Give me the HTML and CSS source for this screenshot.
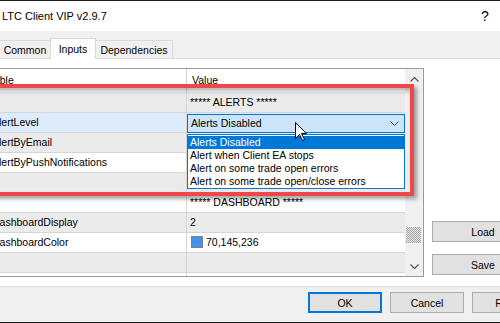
FILE: index.html
```html
<!DOCTYPE html>
<html lang="en">
<head>
  <meta charset="UTF-8" />
  <meta name="viewport" content="width=device-width, initial-scale=1" />
  <title>LTC Client VIP v2.9.7</title>
  <link rel="stylesheet" href="styles.css">
</head>
<body>
  <div class="topline"></div>

  <div class="dialog">
    <div class="titlebar">
      <span class="title">LTC Client VIP v2.9.7</span>
      <div class="caption">
        <span class="cap-btn">?</span>
        <span class="cap-btn"></span>
      </div>
    </div>

    <div class="tabs">
      <div class="tab tab-common">Common</div>
      <div class="tab tab-inputs">Inputs</div>
      <div class="tab tab-deps">Dependencies</div>
    </div>

    <div class="page">
      <div class="grid">
        <div class="rows">
          <div class="row head">
            <div class="name">Variable</div>
            <div class="value">Value</div>
          </div>
          <div class="row gray">
            <div class="name"></div>
            <div class="value">***** ALERTS *****</div>
          </div>
          <div class="row selected">
            <div class="name">AlertLevel</div>
            <div class="value combo-cell">
              <div class="combo">
                <span>Alerts Disabled</span>
                <svg width="9" height="5" viewBox="0 0 9 5"><polyline points="0.5,0.5 4.5,4.5 8.5,0.5" fill="none" stroke="#444" stroke-width="1"/></svg>
              </div>
              <div class="dropdown">
                <div class="option active">Alerts Disabled</div>
                <div class="option">Alert when Client EA stops</div>
                <div class="option">Alert on some trade open errors</div>
                <div class="option">Alert on some trade open/close errors</div>
              </div>
            </div>
          </div>
          <div class="row gray">
            <div class="name">AlertByEmail</div>
            <div class="value"></div>
          </div>
          <div class="row">
            <div class="name">AlertByPushNotifications</div>
            <div class="value"></div>
          </div>
          <div class="row gray">
            <div class="name"></div>
            <div class="value"></div>
          </div>
          <div class="row">
            <div class="name"></div>
            <div class="value">***** DASHBOARD *****</div>
          </div>
          <div class="row gray">
            <div class="name">DashboardDisplay</div>
            <div class="value">2</div>
          </div>
          <div class="row">
            <div class="name">DashboardColor</div>
            <div class="value"><span class="swatch"></span>70,145,236</div>
          </div>
          <div class="row gray">
            <div class="name"></div>
            <div class="value"></div>
          </div>
          <div class="row">
            <div class="name"></div>
            <div class="value"></div>
          </div>
        </div>
        <div class="scrollbar">
          <div class="arrow">
            <svg width="9" height="5" viewBox="0 0 9 5"><polyline points="0.5,4.5 4.5,0.5 8.5,4.5" fill="none" stroke="#555" stroke-width="1.2"/></svg>
          </div>
          <div class="track"><div class="thumb"></div></div>
          <div class="arrow">
            <svg width="9" height="5" viewBox="0 0 9 5"><polyline points="0.5,0.5 4.5,4.5 8.5,0.5" fill="none" stroke="#555" stroke-width="1.2"/></svg>
          </div>
        </div>
      </div>

      <div class="side">
        <button class="btn wide">Load</button>
        <button class="btn wide">Save</button>
      </div>
    </div>

    <div class="footer">
      <button class="btn default">OK</button>
      <button class="btn">Cancel</button>
      <button class="btn">Reset</button>
    </div>
  </div>

  <!-- red highlight drawn over the screenshot -->
  <div class="highlight"></div>

  <svg class="cursor" width="13" height="20" viewBox="0 0 13 20">
    <path d="M0.5 0.5 V16.5 L4.5 12.5 L7.5 18.5 L9.5 17.5 L6.5 11.5 H11.5 Z" fill="#fff" stroke="#000" stroke-width="1" stroke-linejoin="miter"/>
  </svg>
</body>
</html>
```

FILE: styles.css
```css
* {
  box-sizing: border-box;
}
body {
  margin: 0;
  width: 500px;
  height: 323px;
  overflow: hidden;
  position: relative;
  font-family: "Liberation Sans", Arial, sans-serif;
  font-size: 10.5px;
  color: #000;
  background: #f0f0f0;
}
.topline {
  height: 1px;
  background: #1b1b1b;
}
.dialog {
  width: 554px;
}
.titlebar {
  height: 30px;
  background: #fff;
  display: flex;
  align-items: center;
  justify-content: space-between;
}
.title {
  font-size: 11px;
  padding-left: 2px;
}
.caption {
  display: flex;
  align-self: stretch;
}
.cap-btn {
  width: 46px;
  display: flex;
  align-items: center;
  justify-content: center;
  font-size: 14px;
}
.tabs {
  height: 28px;
  display: flex;
  align-items: flex-end;
  border-bottom: 1px solid #d9d9d9;
  background: #f0f0f0;
}
.tab {
  height: 18px;
  border: 1px solid #d9d9d9;
  border-bottom: none;
  display: flex;
  align-items: center;
  justify-content: center;
  background: #f0f0f0;
}
.tab-common {
  width: 52px;
  margin-left: -1px;
}
.tab-inputs {
  width: 46px;
  height: 21px;
  margin: 0 -1px -1px -1px;
  background: #fff;
  position: relative;
}
.tab-deps {
  width: 78px;
}
.page {
  height: 227px;
  background: #fff;
  display: flex;
  align-items: flex-start;
  padding-top: 9px;
}
.grid {
  margin-left: -1px;
  width: 425px;
  height: 209px;
  border: 1px solid #9a9a9a;
  display: flex;
  overflow: hidden;
  flex-shrink: 0;
}
.rows {
  width: 405px;
  background: #fff;
}
.row {
  display: flex;
  height: 20px;
  border-bottom: 1px solid #d6d6d6;
  line-height: 19px;
  white-space: nowrap;
}
.row.gray {
  background: #ebebeb;
}
.row.selected {
  background: #dcecfc;
}
.row.head {
  height: 24px;
  line-height: 23px;
  background: #fff;
  border-bottom-color: #ebebeb;
}
.name {
  width: 187px;
  flex-shrink: 0;
  border-right: 1px solid #d6d6d6;
  overflow: hidden;
  text-indent: -8px;
}
.head .name {
  text-indent: -24px;
}
.value {
  flex: 1;
  padding-left: 3px;
}
.head .value {
  padding-left: 5px;
}
.combo-cell {
  padding-left: 0;
  position: relative;
}
.combo {
  height: 19px;
  margin-top: 1px;
  border: 1px solid #0078d7;
  background: #cce4f7;
  display: flex;
  align-items: center;
  justify-content: space-between;
  padding: 0 5px 0 3px;
  line-height: 17px;
}
.dropdown {
  position: absolute;
  left: 0;
  top: 21px;
  width: 100%;
  border: 1px solid #0078d7;
  background: #fff;
  padding-top: 1px;
  z-index: 3;
}
.option {
  height: 13px;
  line-height: 13px;
  padding-left: 2px;
}
.option.active {
  background: #0078d7;
  color: #fff;
}
.swatch {
  display: inline-block;
  width: 12px;
  height: 12px;
  margin: 0 3px 0 1px;
  vertical-align: -2px;
  border: 1px solid #808080;
  background: rgb(70, 145, 236);
}
.scrollbar {
  width: 18px;
  background: #f0f0f0;
  display: flex;
  flex-direction: column;
}
.arrow {
  height: 20px;
  display: flex;
  align-items: center;
  justify-content: center;
}
.track {
  flex: 1;
}
.thumb {
  height: 16px;
  margin: 138px 2px 0 1px;
  background: repeating-conic-gradient(#a8a8a8 0 25%, #e4e4e4 0 50%) 0 0 / 2px 2px;
}
.side {
  margin-left: 8px;
  padding-top: 153px;
  display: flex;
  flex-direction: column;
  gap: 12px;
}
.btn {
  width: 74px;
  height: 21px;
  padding: 0;
  font-family: inherit;
  font-size: 10.5px;
  color: #000;
  background: #e1e1e1;
  border: 1px solid #adadad;
}
.btn.wide {
  width: 102px;
}
.btn.default {
  border: 2px solid #0078d7;
}
.footer {
  height: 37px;
  border-top: 1px solid #dfdfdf;
  border-bottom: 1px solid #1b1b1b;
  display: flex;
  gap: 8px;
  padding: 5px 0 0 308px;
}
.highlight {
  position: absolute;
  left: -10px;
  top: 84px;
  width: 424px;
  height: 112px;
  border: 4px solid #f04848;
  box-shadow: 3px 3px 4px rgba(0, 0, 0, 0.35), inset 2px 3px 4px rgba(0, 0, 0, 0.3);
  pointer-events: none;
  z-index: 5;
}
.cursor {
  position: absolute;
  left: 295px;
  top: 122px;
  z-index: 6;
}
```
